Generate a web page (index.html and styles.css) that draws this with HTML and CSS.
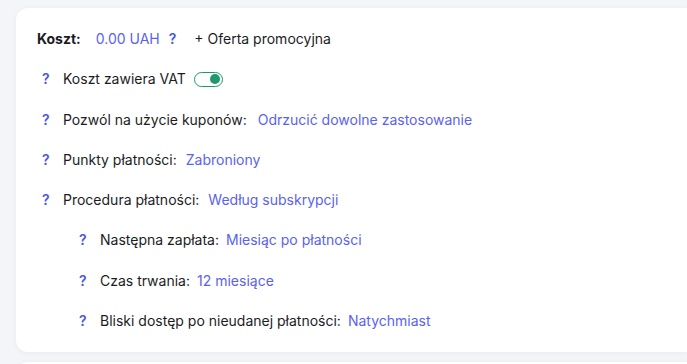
FILE: index.html
```html
<!DOCTYPE html>
<html>
    <head>
        <title>Koszt</title>
        <meta name="viewport" content="width=device-width, user-scalable=no">
        <link rel="stylesheet" href="styles.css">
    </head>
    <body>
        <div class="card">
            <div class="row price_row">
                <span class="price_label">Koszt:</span>
                <span class="value price_value">0.00 UAH</span>
                <span class="hint price_hint">?</span>
                <span class="promo">+ Oferta promocyjna</span>
            </div>
            <div class="row level1">
                <span class="hint">?</span>
                <span class="label">Koszt zawiera VAT</span>
                <span class="toggle"><span class="knob"></span></span>
            </div>
            <div class="row level1">
                <span class="hint">?</span>
                <span class="label">Pozwól na użycie kuponów:</span>
                <span class="value wide">Odrzucić dowolne zastosowanie</span>
            </div>
            <div class="row level1">
                <span class="hint">?</span>
                <span class="label">Punkty płatności:</span>
                <span class="value">Zabroniony</span>
            </div>
            <div class="row level1">
                <span class="hint">?</span>
                <span class="label">Procedura płatności:</span>
                <span class="value">Według subskrypcji</span>
            </div>
            <div class="row level2">
                <span class="hint">?</span>
                <span class="label">Następna zapłata:</span>
                <span class="value">Miesiąc po płatności</span>
            </div>
            <div class="row level2">
                <span class="hint">?</span>
                <span class="label">Czas trwania:</span>
                <span class="value">12 miesiące</span>
            </div>
            <div class="row level2">
                <span class="hint">?</span>
                <span class="label">Bliski dostęp po nieudanej płatności:</span>
                <span class="value">Natychmiast</span>
            </div>
        </div>
        <div class="card next_card"></div>
    </body>
</html>
```

FILE: styles.css
```css
body {
	margin: 0;
	padding: 8px 0 0 16px;
	background: #f4f5f8;
	font-family: Inter, "Noto Sans", sans-serif;
	font-size: 14px;
	color: #1c1c1f;
	overflow: hidden;
}
.card {
	background: #ffffff;
	border-radius: 12px 0 0 12px;
	box-shadow: 0 1px 6px rgba(30, 40, 70, 0.05);
	padding: 21px 0 21px 21px;
	display: flex;
	flex-direction: column;
	gap: 20.3px;
}
.next_card {
	margin-top: 10px;
	height: 40px;
	padding: 0;
}
.row {
	display: flex;
	align-items: center;
	height: 20px;
	line-height: 20px;
	white-space: nowrap;
}
.level1 {
	margin-left: 5px;
}
.level2 {
	margin-left: 42px;
}
.hint {
	color: #4b55e6;
	font-weight: 600;
	width: 21px;
}
.label {
	margin-right: 9px;
}
.level2 .label {
	margin-right: 7px;
}
.value {
	color: #5a62f0;
}
.wide {
	margin-left: 2px;
}
.price_label {
	font-weight: 700;
	margin-right: 15px;
}
.price_hint {
	margin-left: 9px;
	width: auto;
	margin-right: 18px;
}
.toggle {
	width: 23px;
	height: 13px;
	border: 1.5px solid #1c9a6c;
	border-radius: 9px;
	display: flex;
	align-items: center;
	justify-content: flex-end;
	padding: 0 2px;
	margin-left: -1px;
}
.knob {
	width: 10px;
	height: 10px;
	border-radius: 50%;
	background: #1c9a6c;
}
```
